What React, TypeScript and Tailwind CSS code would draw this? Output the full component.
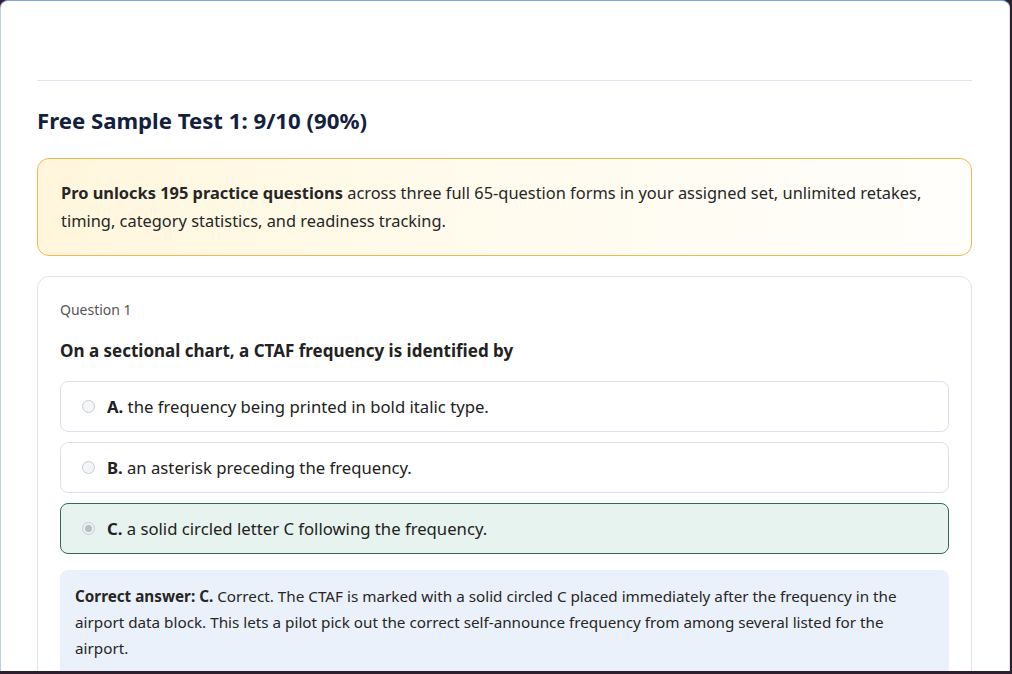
import React from "react";

const font = { fontFamily: '"Noto Sans", "Open Sans", sans-serif' };

function Radio({ checked }: { checked?: boolean }) {
  return (
    <span
      className={`inline-flex h-[13px] w-[13px] shrink-0 items-center justify-center rounded-full border ${
        checked ? "border-[#c9cdd3] bg-[#eef0f2]" : "border-[#c7ccd3] bg-[#f4f5f7]"
      }`}
    >
      {checked && <span className="h-[7px] w-[7px] rounded-full bg-[#b9bec5]" />}
    </span>
  );
}

function Option({ letter, text, correct }: { letter: string; text: string; correct?: boolean }) {
  return (
    <div
      className={`flex h-[51px] items-center gap-[12px] rounded-[8px] border pl-[21px] ${
        correct ? "border-[#2f6b59] bg-[#e6f3ee]" : "border-[#dae2ed] bg-white"
      }`}
    >
      <Radio checked={correct} />
      <span className="text-[16.7px] text-[#222]">
        <b className="font-bold">{letter}.</b> {text}
      </span>
    </div>
  );
}

export default function App() {
  return (
    <div className="h-[674px] w-[1012px] overflow-hidden bg-[#2d1f2e]" style={font}>
      <div className="h-[671px] w-[1010px] overflow-hidden rounded-t-[8px] border-t border-r border-l border-t-[#7ea8dc] border-r-[#dbe2ec] border-l-[#b9cde9] bg-white pl-[36px] pr-[37px]">
        <div className="pt-[79px]">
          <div className="h-px bg-[#dde5ef]" />
        </div>
        <h1 className="mt-[25px] text-[22.2px] font-bold leading-[30px] text-[#14213d]">
          Free Sample Test 1: 9/10 (90%)
        </h1>
        <div className="mt-[22px] rounded-[12px] border border-[#f0b84f] bg-gradient-to-r from-[#fff6dc] via-[#fffbee] to-[#fffefb] px-[23px] py-[20px] text-[16.4px] leading-[28px] text-[#262626]">
          <b className="font-bold">Pro unlocks 195 practice questions</b> across three full 65-question forms in your
          assigned set, unlimited retakes, timing, category statistics, and readiness tracking.
        </div>
        <div className="mt-[20px] rounded-[12px] border border-[#dfe5ee] px-[22px] pt-[23px] pb-[23px]">
          <div className="text-[14px] leading-[20px] text-[#555]">Question 1</div>
          <div className="mt-[19px] text-[17px] font-bold leading-[24px] text-[#222]">
            On a sectional chart, a CTAF frequency is identified by
          </div>
          <div className="mt-[18px] flex flex-col gap-[10px]">
            <Option letter="A" text="the frequency being printed in bold italic type." />
            <Option letter="B" text="an asterisk preceding the frequency." />
            <Option letter="C" text="a solid circled letter C following the frequency." correct />
          </div>
          <div className="mt-[16px] rounded-[8px] bg-[#ebf1fa] px-[15px] pt-[13px] pb-[20px] text-[15.25px] leading-[26px] text-[#262626]">
            <b className="font-bold">Correct answer: C.</b> Correct. The CTAF is marked with a solid circled C placed
            immediately after the frequency in the airport data block. This lets a pilot pick out the correct
            self-announce frequency from among several listed for the airport.
          </div>
        </div>
      </div>
    </div>
  );
}
